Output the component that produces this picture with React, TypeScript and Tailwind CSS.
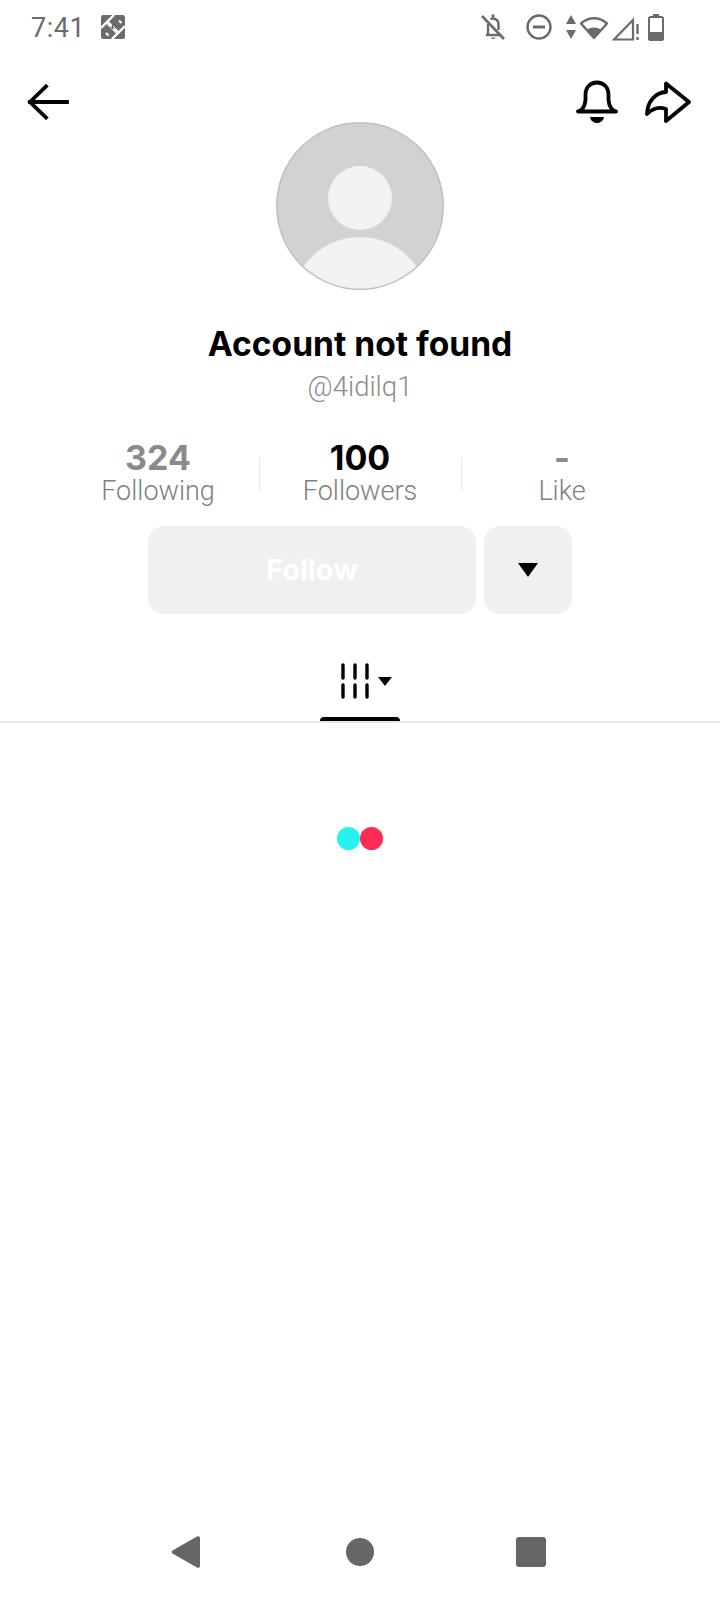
import React from 'react';

const StatusIcons = () => (
  <div className="flex items-center text-[#6b6b6b]">
    <svg width="26" height="28" viewBox="0 0 26 28" fill="none" stroke="currentColor" strokeWidth="2.400" className="mr-[19px]">
      <path d="M6 22h15M8 11v11M18.500 17v-6a5.500 5.500 0 0 0-8-4.800" />
      <path d="M11 24.500a2.400 2.400 0 0 0 4.500 0z" fill="currentColor" stroke="none" />
      <rect x="11.500" y="1.500" width="3" height="3" fill="currentColor" stroke="none" />
      <path d="M2 3l22 23" strokeWidth="2.600" />
    </svg>
    <svg width="28" height="28" viewBox="0 0 28 28" fill="none" stroke="currentColor" strokeWidth="2.400" className="mr-[12px]">
      <circle cx="14" cy="14" r="11.500" />
      <path d="M8 14h12" strokeWidth="3" />
    </svg>
    <svg width="12" height="26" viewBox="0 0 12 26" fill="currentColor" className="mr-[2px]">
      <path d="M6 1l5 9H1zM1 16h10l-5 9z" />
    </svg>
    <svg width="30" height="28" viewBox="0 0 30 28" fill="none" className="mr-[3px]">
      <path d="M15 25L2 10.500C9.500 3.500 20.500 3.500 28 10.500z" stroke="currentColor" strokeWidth="2.400" strokeLinejoin="round" />
      <path d="M15 25L8 17c4-3.200 10-3.200 14 0z" fill="currentColor" />
    </svg>
    <svg width="28" height="28" viewBox="0 0 28 28" fill="none" stroke="currentColor" className="mr-[8px]">
      <path d="M2 26.500L21 7v19.500z" strokeWidth="2.200" />
      <path d="M25.500 11v10M25.500 24v3" strokeWidth="2.400" />
    </svg>
    <svg width="16" height="27" viewBox="0 0 16 27" fill="none">
      <rect x="5" y="0" width="6" height="3" fill="currentColor" />
      <rect x="1" y="3" width="14" height="23" rx="1.500" stroke="currentColor" strokeWidth="2" />
      <rect x="1" y="18" width="14" height="8" fill="currentColor" />
    </svg>
  </div>
);

const Stat = ({ value, label, muted }: { value: string; label: string; muted?: boolean }) => (
  <div className="flex w-[201px] flex-col items-center">
    <span className={`font-['Inter',sans-serif] text-[34px] leading-[36px] font-bold ${muted ? 'text-[#8a8a8a]' : 'text-black'}`}>{value}</span>
    <span className="text-[27px] leading-[31px] font-light text-[#808080]">{label}</span>
  </div>
);

export default function App() {
  return (
    <div className="flex min-h-[1600px] w-[720px] flex-col bg-white font-['Roboto',sans-serif]">
      <div className="flex h-[54px] items-center justify-between pr-[56px] pl-[31px]">
        <div className="flex items-center gap-[16px]">
          <span className="pt-[1px] text-[27px] leading-[32px] tracking-[0.5px] text-[#6b6b6b]">7:41</span>
          <svg width="24" height="24" viewBox="0 0 24 24">
            <rect width="24" height="24" rx="2.500" fill="#6b6b6b" />
            <path d="M0 13L13 0M11 24L24 11" stroke="#fff" strokeWidth="2.400" />
            <path d="M8 6.500L17.500 16 15 18.500 5.500 9z" fill="#fff" />
            <path d="M18 5.500l2.500 2.500M5 18l2.500 2.500" stroke="#fff" strokeWidth="2" />
            <path d="M11.500 9v4.500M9.500 11.500l2 2.200 2-2.200" stroke="#6b6b6b" strokeWidth="1.100" fill="none" />
          </svg>
        </div>
        <StatusIcons />
      </div>

      <div className="flex h-[68px] items-center justify-between pt-[28px] pr-[29px] pl-[27px]">
        <svg width="42" height="36" viewBox="0 0 42 36" fill="none" stroke="#000" strokeWidth="3.800" strokeLinecap="square">
          <path d="M3 18h37M19 2.500L3 18l16 15.500" />
        </svg>
        <div className="flex items-center gap-[26px]">
          <svg width="42" height="44" viewBox="0 0 42 44" fill="none">
            <path d="M2 31.500H40C36 31 33 26 32.500 20V15C32.500 7 27.500 2.500 21 2.500S9.500 7 9.500 15V20C9 26 6 31 2 31.500z" stroke="#000" strokeWidth="3.800" strokeLinejoin="round" />
            <path d="M14 37h14c-.5 3.500-3.500 6-7 6s-6.500-2.500-7-6z" fill="#000" />
          </svg>
          <svg width="47" height="42" viewBox="0 0 47 42" fill="none">
            <path d="M22 2.500L45 21 22 40V28C15 25.500 8 28 3 33 3.500 20 12 11.500 22 11z" stroke="#000" strokeWidth="3.800" strokeLinejoin="round" />
          </svg>
        </div>
      </div>

      <div className="flex flex-col items-center">
        <svg width="168" height="168" viewBox="0 0 168 168">
          <defs>
            <clipPath id="avatar-clip">
              <circle cx="84" cy="84" r="82.500" />
            </clipPath>
          </defs>
          <circle cx="84" cy="84" r="84" fill="#bfc0c1" />
          <g clipPath="url(#avatar-clip)">
            <circle cx="84" cy="84" r="83" fill="#d1d2d4" />
            <circle cx="84" cy="76" r="32" fill="#f2f2f3" />
            <circle cx="84" cy="184" r="69" fill="#f2f2f3" />
          </g>
        </svg>
        <h1 className="mt-[34px] font-['Inter',sans-serif] text-[33.600px] leading-[40px] font-bold text-black">Account not found</h1>
        <p className="mt-[6px] text-[27.500px] leading-[34px] font-light text-[#8c8c8c]">@4idilq1</p>

        <div className="mt-[36px] flex items-center">
          <Stat value="324" label="Following" muted />
          <div className="h-[32px] w-px bg-[#e6e6e6]" />
          <Stat value="100" label="Followers" />
          <div className="h-[32px] w-px bg-[#e6e6e6]" />
          <Stat value="-" label="Like" muted />
        </div>

        <div className="mt-[19px] flex gap-[8px]">
          <div className="flex h-[88px] w-[328px] items-center justify-center rounded-[16px] bg-[#f0f0f0] font-['Inter',sans-serif] text-[29px] font-bold text-white">
            Follow
          </div>
          <div className="flex h-[88px] w-[88px] items-center justify-center rounded-[16px] bg-[#f0f0f0]">
            <svg width="20" height="14" viewBox="0 0 20 14">
              <path d="M0 0h20L10 14z" fill="#000" />
            </svg>
          </div>
        </div>
      </div>

      <div className="mt-[49px] flex flex-col items-center border-b-[2px] border-[#e8e8e8]">
        <div className="flex h-[54px] items-start pl-[14px]">
          <svg width="32" height="36" viewBox="0 0 32 36" stroke="#000" strokeWidth="3.400" strokeLinecap="round" className="-ml-[3px]">
            <path d="M3 2v13M15 2v13M27 2v13M3 22v12M15 22v12M27 22v12" />
          </svg>
          <svg width="14" height="9" viewBox="0 0 14 9" className="mt-[14px] ml-[6px]">
            <path d="M0 0h14L7 9z" fill="#000" />
          </svg>
        </div>
        <div className="h-[4px] w-[80px] rounded-t-[4px] bg-black" />
      </div>

      <div className="mt-[104px] flex justify-center">
        <div className="h-[23px] w-[23px] rounded-full bg-[#25f4ee]" />
        <div className="h-[23px] w-[23px] rounded-full bg-[#fe2c55]" />
      </div>

      <div className="mt-auto flex h-[65px] items-start justify-center pr-[4px]">
        <div className="flex items-center">
          <svg width="30" height="34" viewBox="0 0 30 34">
            <path d="M1.500 15.500L26 1.500c1.500-.800 3 0 3 1.500v28c0 1.500-1.500 2.300-3 1.500L1.500 18.500c-1.200-.700-1.200-2.300 0-3z" fill="#666" />
          </svg>
          <div className="ml-[145px] h-[28px] w-[28px] rounded-full bg-[#666]" />
          <div className="ml-[142px] h-[30px] w-[30px] rounded-[3px] bg-[#666]" />
        </div>
      </div>
    </div>
  );
}
